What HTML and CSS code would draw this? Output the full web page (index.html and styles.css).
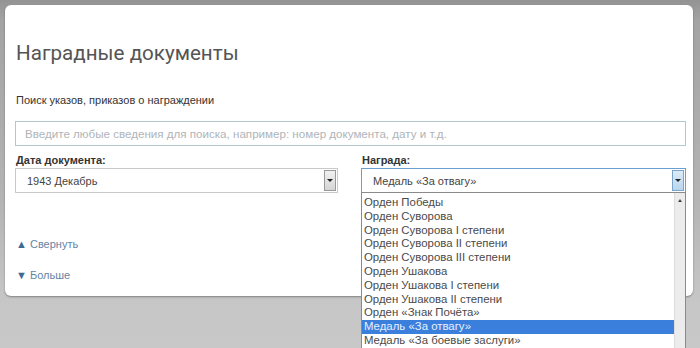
FILE: index.html
```html
<!DOCTYPE html>
<html lang="ru">
<head>
<meta charset="utf-8">
<link rel="stylesheet" href="styles.css">
</head>
<body>
<div class="card">
  <h1 class="title">Наградные документы</h1>
  <div class="subtitle">Поиск указов, приказов о награждении</div>
  <div class="search">Введите любые сведения для поиска, например: номер документа, дату и т.д.</div>
  <div class="fields">
    <div class="field">
      <div class="label">Дата документа:</div>
      <div class="select">
        <span class="value">1943 Декабрь</span>
        <span class="btn"><i class="tri"></i></span>
      </div>
    </div>
    <div class="field">
      <div class="label">Награда:</div>
      <div class="select focus">
        <span class="value">Медаль «За отвагу»</span>
        <span class="btn"><i class="tri"></i></span>
        <div class="dropdown">
          <ul class="options">
            <li>Орден Победы</li>
            <li>Орден Суворова</li>
            <li>Орден Суворова I степени</li>
            <li>Орден Суворова II степени</li>
            <li>Орден Суворова III степени</li>
            <li>Орден Ушакова</li>
            <li>Орден Ушакова I степени</li>
            <li>Орден Ушакова II степени</li>
            <li>Орден «Знак Почёта»</li>
            <li class="sel">Медаль «За отвагу»</li>
            <li>Медаль «За боевые заслуги»</li>
          </ul>
          <div class="scroll"><i class="up"></i></div>
        </div>
      </div>
    </div>
  </div>
  <div class="links">
    <a class="link"><span class="arr">▲</span> Свернуть</a>
    <a class="link"><span class="arr">▼</span> Больше</a>
  </div>
</div>
</body>
</html>
```

FILE: styles.css
```css
html, body {
  margin: 0;
  padding: 0;
}
body {
  width: 700px;
  height: 348px;
  overflow: hidden;
  background: linear-gradient(#939393 0, #a3a3a3 20px, #b4b4b4 200px, #c6c6c6 300px, #c8c8c8 348px);
  font-family: "Liberation Sans", Arial, sans-serif;
  color: #333;
}
.card {
  margin: 5px 7px 0 5px;
  height: 291px;
  box-sizing: border-box;
  background: #fff;
  border-radius: 6px;
  box-shadow: 0 1px 2px rgba(0, 0, 0, 0.35);
  padding: 0 7px 0 10px;
}
.title {
  margin: 0;
  padding-top: 35px;
  font-family: Roboto, "Liberation Sans", sans-serif;
  font-weight: 400;
  font-size: 20.6px;
  line-height: 26px;
  color: #555;
  padding-left: 1px;
}
.subtitle {
  margin-top: 27px;
  font-size: 11px;
  line-height: 14px;
  padding-left: 1px;
  color: #333;
}
.search {
  margin-top: 14px;
  height: 25px;
  box-sizing: border-box;
  border: 1px solid #b6c6cf;
  font-size: 11.6px;
  line-height: 23px;
  padding-left: 9px;
  color: #b0b4b8;
  white-space: nowrap;
  overflow: hidden;
}
.fields {
  display: grid;
  grid-template-columns: 323px 325px;
  column-gap: 23px;
  margin-top: 7px;
}
.label {
  font-size: 11px;
  line-height: 14px;
  font-weight: 700;
  color: #333;
  padding-left: 1px;
}
.select {
  position: relative;
  margin-top: 1px;
  height: 25px;
  box-sizing: border-box;
  border: 1px solid #c9c9c9;
  display: flex;
  align-items: center;
  justify-content: space-between;
  font-size: 11px;
  color: #444;
}
.value {
  padding-left: 11px;
}
.btn {
  align-self: stretch;
  width: 10px;
  margin: 1px;
  border: 1px solid #9a9a9a;
  background: linear-gradient(#f2f2f2, #d4d4d4);
  display: flex;
  align-items: center;
  justify-content: center;
}
.tri {
  width: 0;
  height: 0;
  border-left: 3px solid transparent;
  border-right: 3px solid transparent;
  border-top: 3px solid #222;
}
.select.focus {
  border-color: #6a9fd0;
}
.select.focus .btn {
  border-color: #7aa6cc;
  background: linear-gradient(#dcebf8, #b9d5ee);
}
.dropdown {
  position: absolute;
  left: -1px;
  right: -1px;
  top: 23px;
  height: 160px;
  background: #fff;
  border: 1px solid #8a8a8a;
  border-bottom: 0;
  box-sizing: border-box;
  display: flex;
  overflow: hidden;
  z-index: 2;
}
.options {
  list-style: none;
  margin: 0;
  padding: 3px 0 0 0;
  flex: 1;
  font-size: 11.4px;
  color: #4a4a4a;
}
.options li {
  height: 13.8px;
  line-height: 13.8px;
  padding-left: 2px;
  white-space: nowrap;
}
.options li.sel {
  background: #3b7fdc;
  color: #e8f0ff;
}
.scroll {
  width: 11px;
  background: #ececec;
  border-left: 1px solid #dcdcdc;
  display: flex;
  justify-content: center;
  padding-top: 6px;
  box-sizing: border-box;
}
.up {
  width: 0;
  height: 0;
  border-left: 2px solid transparent;
  border-right: 2px solid transparent;
  border-bottom: 3px solid #444;
}
.links {
  display: flex;
  flex-direction: column;
  gap: 17px;
  margin-top: 44px;
  padding-left: 1px;
}
.link {
  font-size: 11px;
  line-height: 14px;
  color: #6484a4;
}
.arr {
  color: #3f6a96;
}
```
